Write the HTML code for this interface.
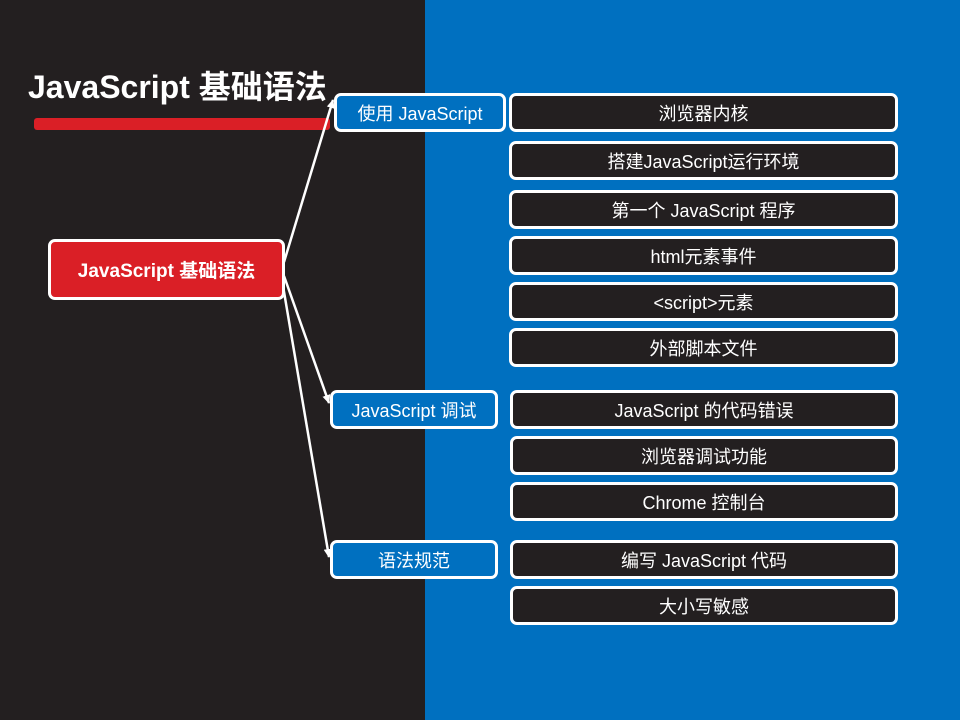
<!DOCTYPE html>
<html><head><meta charset="utf-8"><style>
body{margin:0;width:960px;height:720px;overflow:hidden;position:relative;background:#231f20;font-family:"Liberation Sans","Noto Sans CJK SC",sans-serif;color:#fff}
.blue{position:absolute;left:425px;top:0;width:535px;height:720px;background:#0070c0}
.b{position:absolute;box-sizing:border-box;border:3px solid #fff;border-radius:7px;display:flex;align-items:center;justify-content:center;font-size:18px}
.d{background:#231f20}
.m{background:#0070c0}
h1{position:absolute;left:28px;top:62px;margin:0;font-size:32px;font-weight:bold;letter-spacing:0}
.bar{position:absolute;left:34px;top:118px;width:296px;height:12px;background:#da1f26;border-radius:3px}
</style></head><body>
<div class="blue"></div>
<h1>JavaScript 基础语法</h1>
<div class="bar"></div>
<svg style="position:absolute;left:0;top:0" width="960" height="720">
<defs><marker id="a" markerUnits="userSpaceOnUse" markerWidth="10" markerHeight="10" refX="8" refY="5" orient="auto"><path d="M0,1L9,5L0,9z" fill="#fff"/></marker></defs>
<g stroke="#fff" stroke-width="2.5" fill="none">
<line x1="284" y1="262" x2="333" y2="100" marker-end="url(#a)"/>
<line x1="284" y1="276" x2="329" y2="403" marker-end="url(#a)"/>
<line x1="282" y1="280" x2="329" y2="557" marker-end="url(#a)"/>
</g></svg>
<div class="b" style="left:48px;top:239px;width:237px;height:61px;background:#da1f26;font-weight:bold;font-size:19px">JavaScript 基础语法</div>
<div class="b m" style="left:334px;top:93px;width:172px;height:39px">使用 JavaScript</div>
<div class="b m" style="left:330px;top:390px;width:168px;height:39px">JavaScript 调试</div>
<div class="b m" style="left:330px;top:540px;width:168px;height:39px">语法规范</div>
<div class="b d" style="left:509px;top:93px;width:389px;height:39px">浏览器内核</div>
<div class="b d" style="left:509px;top:141px;width:389px;height:39px">搭建JavaScript运行环境</div>
<div class="b d" style="left:509px;top:190px;width:389px;height:39px">第一个 JavaScript 程序</div>
<div class="b d" style="left:509px;top:236px;width:389px;height:39px">html元素事件</div>
<div class="b d" style="left:509px;top:282px;width:389px;height:39px">&lt;script&gt;元素</div>
<div class="b d" style="left:509px;top:328px;width:389px;height:39px">外部脚本文件</div>
<div class="b d" style="left:510px;top:390px;width:388px;height:39px">JavaScript 的代码错误</div>
<div class="b d" style="left:510px;top:436px;width:388px;height:39px">浏览器调试功能</div>
<div class="b d" style="left:510px;top:482px;width:388px;height:39px">Chrome 控制台</div>
<div class="b d" style="left:510px;top:540px;width:388px;height:39px">编写 JavaScript 代码</div>
<div class="b d" style="left:510px;top:586px;width:388px;height:39px">大小写敏感</div>
</body></html>
